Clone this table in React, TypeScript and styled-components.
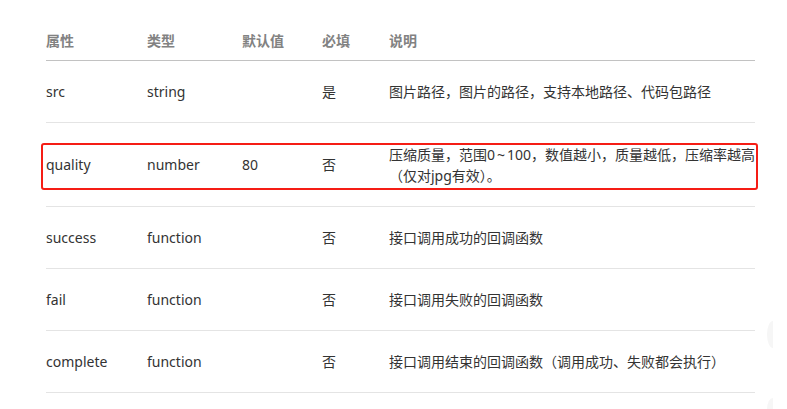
import React from "react";
import styled, { createGlobalStyle } from "styled-components";

const GlobalStyle = createGlobalStyle`
  html, body {
    margin: 0;
    padding: 0;
    background: #ffffff;
  }
  body {
    font-family: "Segoe UI", "Noto Sans", "Noto Sans CJK SC", sans-serif;
    font-size: 14px;
    color: #333333;
  }
`;

const Page = styled.div`
  position: relative;
  width: 787px;
  height: 409px;
  overflow: hidden;
  padding-top: 21px;
  box-sizing: border-box;
`;

const Table = styled.div`
  width: 709px;
  margin-left: 46px;
`;

const Row = styled.div<{ $height: number; $header?: boolean }>`
  position: relative;
  display: grid;
  grid-template-columns: 101px 95px 80px 67px 1fr;
  align-items: center;
  height: ${(p) => p.$height}px;
  box-sizing: border-box;
  border-bottom: 1px solid ${(p) => (p.$header ? "#c2c2c2" : "#e4e4e4")};
`;

const HeadCell = styled.div`
  font-weight: 700;
  color: #828282;
  font-size: 14px;
  line-height: 20px;
`;

const Cell = styled.div`
  color: #333333;
  font-size: 14px;
  line-height: 21px;
  white-space: pre;
`;

const Tilde = styled.span`
  font-family: "Noto Sans", sans-serif;
  padding: 0 2px;
`;

const Highlight = styled.div`
  position: absolute;
  left: -5px;
  right: -3px;
  top: 20px;
  height: 47px;
  border: 2px solid #f51d15;
  border-radius: 3px;
  box-sizing: border-box;
  pointer-events: none;
`;

const EdgeShade = styled.div<{ $top: number; $height: number }>`
  position: absolute;
  left: 767px;
  top: ${(p) => p.$top}px;
  width: 6px;
  height: ${(p) => p.$height}px;
  background: #f6f6f6;
  border-radius: 100% 0 0 100% / 50% 0 0 50%;
`;

type Item = {
  name: string;
  type: string;
  def: string;
  required: string;
  desc: React.ReactNode;
  height: number;
  highlight?: boolean;
};

const items: Item[] = [
  {
    name: "src",
    type: "string",
    def: "",
    required: "是",
    desc: "图片路径，图片的路径，支持本地路径、代码包路径",
    height: 62,
  },
  {
    name: "quality",
    type: "number",
    def: "80",
    required: "否",
    desc: (
      <>
        压缩质量，范围0<Tilde>~</Tilde>100，数值越小，质量越低，压缩率越高
        {"\n"}（仅对jpg有效）。
      </>
    ),
    height: 84,
    highlight: true,
  },
  {
    name: "success",
    type: "function",
    def: "",
    required: "否",
    desc: "接口调用成功的回调函数",
    height: 62,
  },
  {
    name: "fail",
    type: "function",
    def: "",
    required: "否",
    desc: "接口调用失败的回调函数",
    height: 62,
  },
  {
    name: "complete",
    type: "function",
    def: "",
    required: "否",
    desc: "接口调用结束的回调函数（调用成功、失败都会执行）",
    height: 62,
  },
];

export default function App() {
  return (
    <>
      <GlobalStyle />
      <Page>
        <Table>
          <Row $height={40} $header>
            <HeadCell>属性</HeadCell>
            <HeadCell>类型</HeadCell>
            <HeadCell>默认值</HeadCell>
            <HeadCell>必填</HeadCell>
            <HeadCell>说明</HeadCell>
          </Row>
          {items.map((it) => (
            <Row key={it.name} $height={it.height}>
              <Cell>{it.name}</Cell>
              <Cell>{it.type}</Cell>
              <Cell>{it.def}</Cell>
              <Cell>{it.required}</Cell>
              <Cell>{it.desc}</Cell>
              {it.highlight && <Highlight />}
            </Row>
          ))}
        </Table>
        <EdgeShade $top={321} $height={27} />
        <EdgeShade $top={398} $height={22} />
      </Page>
    </>
  );
}
